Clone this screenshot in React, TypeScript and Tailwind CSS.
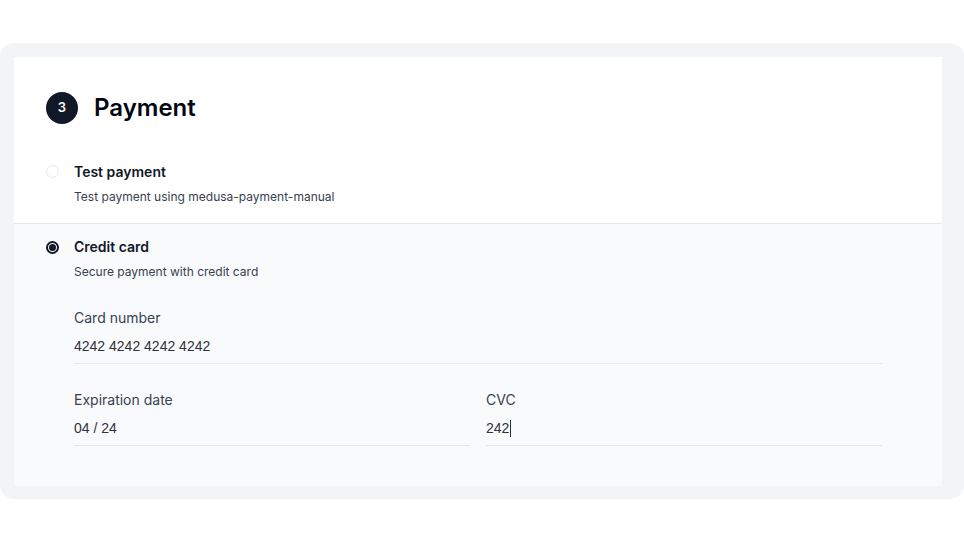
import React from "react";

function Field({ label, value, caret }: { label: string; value: string; caret?: boolean }) {
  return (
    <div className="flex flex-col flex-1 min-w-0">
      <div className="text-[14px] leading-[20px] text-[#374151]">{label}</div>
      <div
        className="mt-[8px] pb-[7px] border-b border-[#e5e7eb] text-[14px] leading-[20px] text-[#30313d] flex items-center"
        style={{ fontFamily: "'Liberation Sans', Arial, sans-serif" }}
      >
        <span>{value}</span>
        {caret && <span className="inline-block w-px h-[17px] bg-[#30313d] ml-px" />}
      </div>
    </div>
  );
}

export default function App() {
  return (
    <div className="w-[964px] h-[542px] bg-white pt-[43px]" style={{ fontFamily: "Inter, 'Noto Sans', sans-serif" }}>
      <div className="rounded-[14px] bg-[#f3f4f6] pl-[14px] pt-[14px] pr-[22px] pb-[13px]">
        <div className="bg-white">
          <div className="pl-[32px] pt-[33px] flex items-center gap-[16px]">
            <div className="w-[32px] h-[32px] mt-[1px] rounded-full bg-[#111827] text-white text-[13px] font-semibold flex items-center justify-center">3</div>
            <div className="text-[24px] leading-[32px] font-semibold text-[#030712] mt-[2px]">Payment</div>
          </div>
          <div className="pl-[32px] pt-[38px] pb-[18px] flex border-b border-[#e5e7eb]">
            <div className="w-[13px] h-[13px] mt-[3px] rounded-full border border-[#e5e7eb] bg-white shrink-0" />
            <div className="ml-[15px] flex flex-col">
              <div className="text-[14px] leading-[20px] font-semibold text-[#111827]">Test payment</div>
              <div className="mt-[7px] text-[12px] leading-[16px] text-[#374151]">Test payment using medusa-payment-manual</div>
            </div>
          </div>
          <div className="bg-[#f9fafb] pl-[32px] pr-[60px] pt-[13px] pb-[40px] flex">
            <div className="w-[13px] h-[13px] mt-[4px] rounded-full border-[2px] border-[#111827] bg-white shrink-0 flex items-center justify-center">
              <div className="w-[7px] h-[7px] rounded-full bg-[#111827]" />
            </div>
            <div className="ml-[15px] flex flex-col flex-1">
              <div className="text-[14px] leading-[20px] font-semibold text-[#111827]">Credit card</div>
              <div className="mt-[7px] text-[12px] leading-[16px] text-[#374151]">Secure payment with credit card</div>
              <div className="mt-[28px] flex">
                <Field label="Card number" value="4242 4242 4242 4242" />
              </div>
              <div className="mt-[26px] flex gap-[16px]">
                <Field label="Expiration date" value="04 / 24" />
                <Field label="CVC" value="242" caret />
              </div>
            </div>
          </div>
        </div>
      </div>
    </div>
  );
}
